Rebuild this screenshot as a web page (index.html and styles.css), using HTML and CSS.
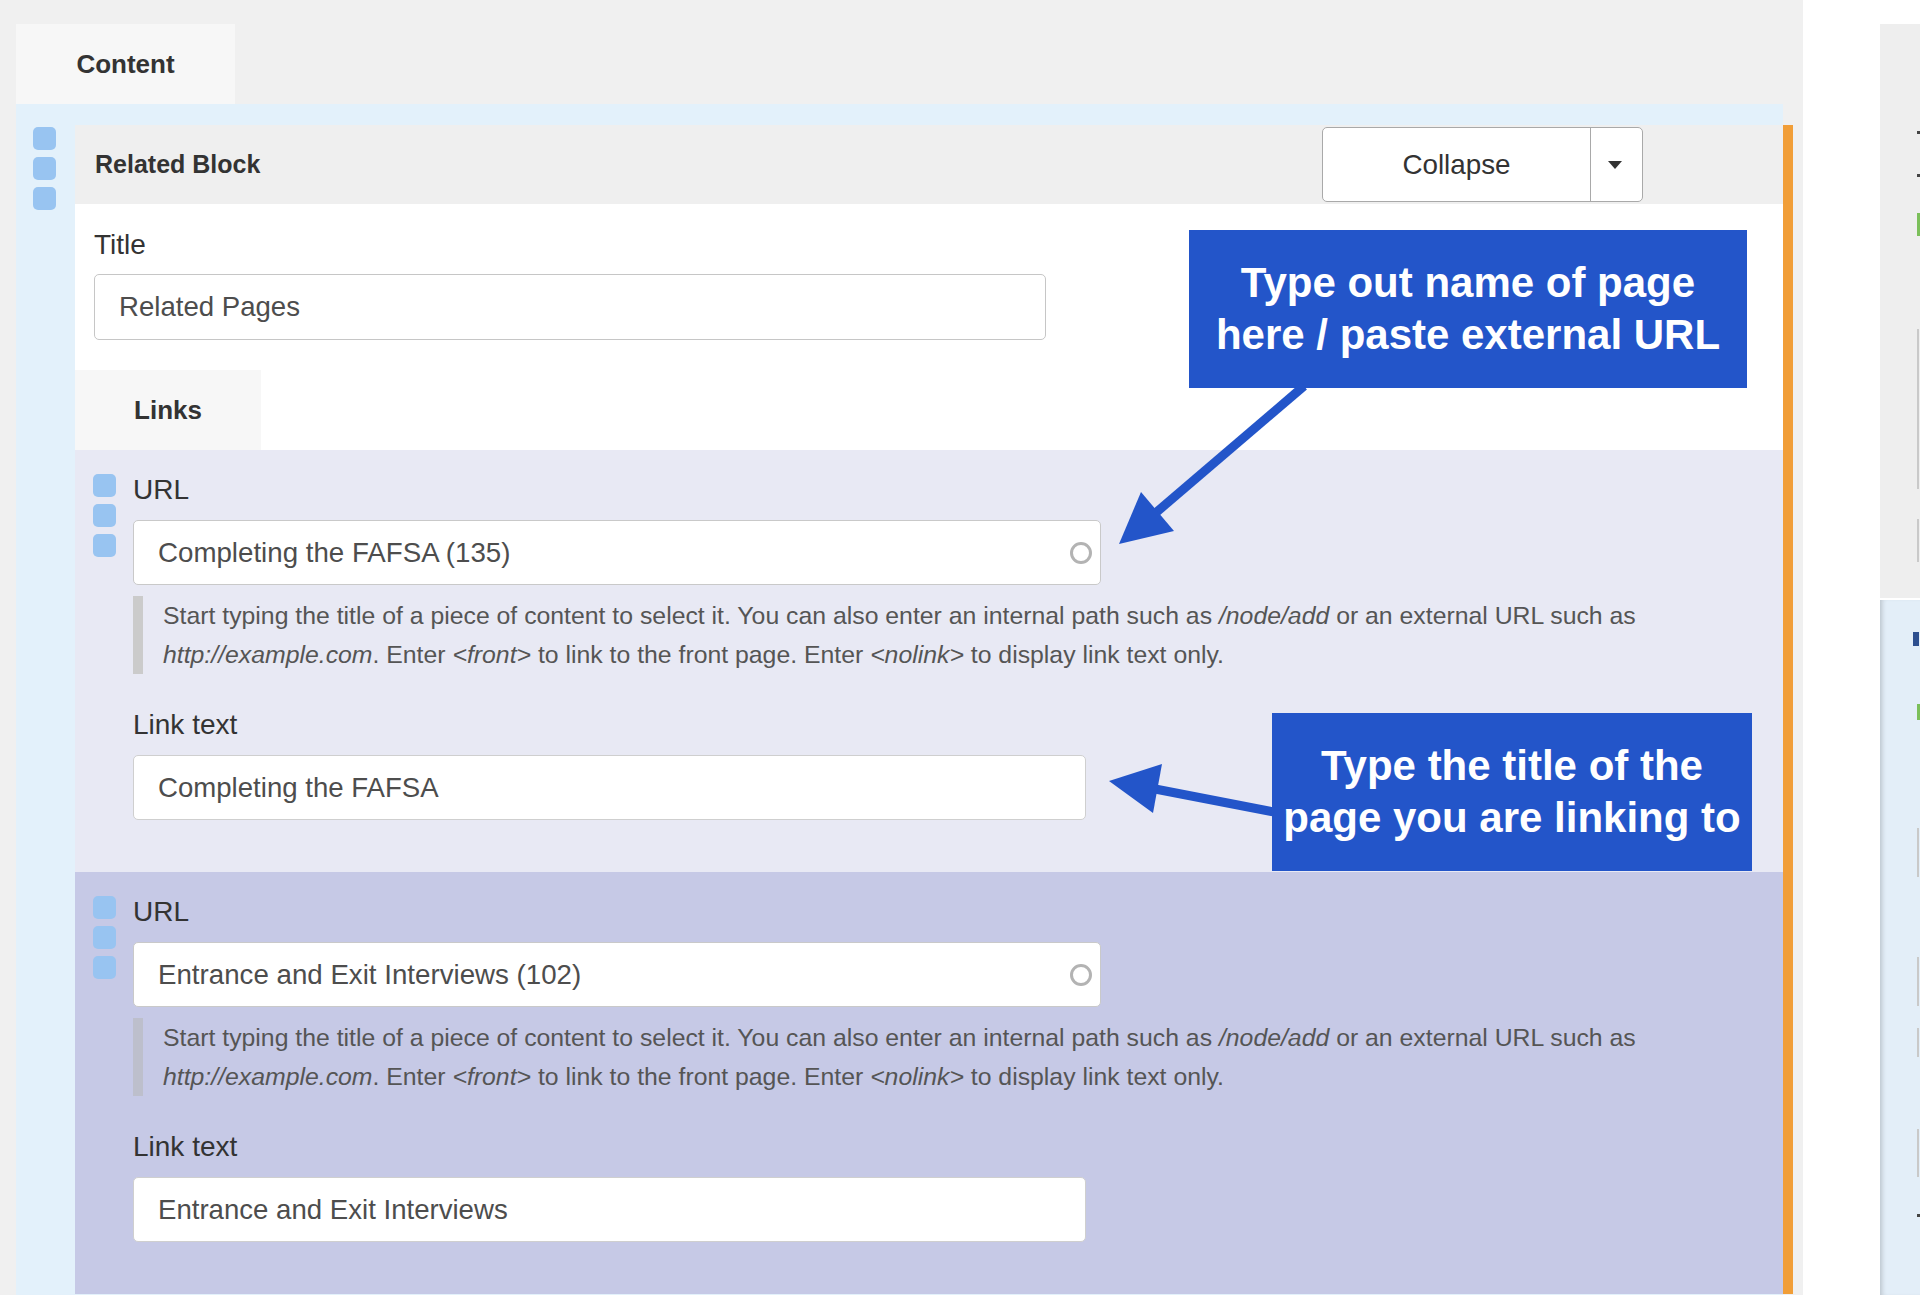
FILE: index.html
```html
<!DOCTYPE html>
<html lang="en">
<head>
  <meta charset="UTF-8" />
  <title>Related Block</title>
  <meta name="viewport" content="width=device-width, initial-scale=1.0" />
  <link rel="stylesheet" href="styles.css">
</head>
<body>
  <div class="page">
    <main class="main">
      <div class="tab-content">Content</div>

      <div class="region">
        <div class="handles"><span></span><span></span><span></span></div>

        <div class="block">
          <div class="block-header">
            <h2>Related Block</h2>
            <div class="split-btn">
              <button class="btn-main" type="button">Collapse</button>
              <button class="btn-caret" type="button"><span class="caret"></span></button>
            </div>
          </div>

          <div class="block-body">
            <div class="title-field">
              <label class="field-label">Title</label>
              <input class="text-input title-input" type="text" value="Related Pages" />
            </div>
            <div class="tab-links">Links</div>
          </div>

          <div class="link-item">
            <div class="handles"><span></span><span></span><span></span></div>
            <div class="link-fields">
              <label class="field-label">URL</label>
              <div class="autocomplete">
                <input type="text" value="Completing the FAFSA (135)" />
                <span class="throbber"></span>
              </div>
              <div class="description">
                Start typing the title of a piece of content to select it. You can also enter an internal path such as <em>/node/add</em> or an external URL such as <em>http://example.com</em>. Enter <em>&lt;front&gt;</em> to link to the front page. Enter <em>&lt;nolink&gt;</em> to display link text only.
              </div>
              <label class="field-label spaced">Link text</label>
              <input class="text-input link-input" type="text" value="Completing the FAFSA" />
            </div>
          </div>

          <div class="link-item alt">
            <div class="handles"><span></span><span></span><span></span></div>
            <div class="link-fields">
              <label class="field-label">URL</label>
              <div class="autocomplete">
                <input type="text" value="Entrance and Exit Interviews (102)" />
                <span class="throbber"></span>
              </div>
              <div class="description">
                Start typing the title of a piece of content to select it. You can also enter an internal path such as <em>/node/add</em> or an external URL such as <em>http://example.com</em>. Enter <em>&lt;front&gt;</em> to link to the front page. Enter <em>&lt;nolink&gt;</em> to display link text only.
              </div>
              <label class="field-label spaced">Link text</label>
              <input class="text-input link-input" type="text" value="Entrance and Exit Interviews" />
            </div>
          </div>
        </div>
      </div>
    </main>

    <div class="gutter"></div>

    <aside class="side">
      <div class="side-top">
        <span class="mark dark m1"></span>
        <span class="mark dark m2"></span>
        <span class="mark green m3"></span>
        <span class="mark line m4"></span>
        <span class="mark line m5"></span>
      </div>
      <div class="side-bottom">
        <span class="mark navy m12"></span>
        <span class="mark green m6"></span>
        <span class="mark line m7"></span>
        <span class="mark line m8"></span>
        <span class="mark line m9"></span>
        <span class="mark line m10"></span>
        <span class="mark dark m11"></span>
      </div>
    </aside>
  </div>

  <!-- annotations drawn over the form -->
  <div class="callout callout-url">Type out name of page<br>here / paste external URL</div>
  <div class="callout callout-text">Type the title of the<br>page you are linking to</div>

  <svg class="arrows" width="1920" height="1295" viewBox="0 0 1920 1295">
    <line x1="1304" y1="386" x2="1152" y2="516" stroke="#2355c9" stroke-width="9" />
    <polygon points="1119,544 1141,492 1174,531" fill="#2355c9" />
    <line x1="1274" y1="812" x2="1150" y2="788" stroke="#2355c9" stroke-width="9" />
    <polygon points="1109,781 1162,764 1153,813" fill="#2355c9" />
  </svg>
</body>
</html>
```

FILE: styles.css
```css
html, body {
  margin: 0;
  padding: 0;
  width: 1920px;
  height: 1295px;
  overflow: hidden;
  font-family: "Liberation Sans", Arial, sans-serif;
  background: #fff;
  color: #333;
}

.page {
  display: flex;
  height: 1295px;
}

.main {
  width: 1803px;
  flex: none;
  box-sizing: border-box;
  padding: 24px 20px 0 16px;
  background: #f0f0f0;
  overflow: hidden;
}

.gutter {
  width: 77px;
  flex: none;
  background: #fff;
}

.tab-content {
  width: 219px;
  height: 80px;
  line-height: 80px;
  text-align: center;
  background: #f7f7f7;
  font-size: 26px;
  font-weight: bold;
  color: #333;
}

.region {
  display: flex;
  align-items: flex-start;
  padding-top: 21px;
  background: #e3f1fb;
  min-height: 1200px;
}

.handles {
  display: flex;
  flex-direction: column;
  gap: 7px;
  flex: none;
  box-sizing: border-box;
}

.handles span {
  width: 23px;
  height: 23px;
  border-radius: 5px;
  background: #98c4f1;
}

.region > .handles {
  width: 59px;
  padding: 2px 0 0 17px;
}

.block {
  flex: 1;
  min-width: 0;
  margin-right: -10px;
  border-right: 10px solid #f19e38;
}

.block-header {
  display: flex;
  align-items: center;
  justify-content: space-between;
  height: 79px;
  padding: 0 140px 0 20px;
  background: #efefef;
}

.block-header h2 {
  margin: 0;
  font-size: 25px;
  font-weight: bold;
  color: #333;
}

.split-btn {
  display: flex;
  width: 321px;
  height: 75px;
  box-sizing: border-box;
  border: 1.5px solid #a9a9a9;
  border-radius: 5px;
  background: #fff;
  overflow: hidden;
}

.btn-main {
  width: 268px;
  border: none;
  border-right: 1.5px solid #a9a9a9;
  background: transparent;
  font-family: inherit;
  font-size: 27.8px;
  color: #333;
  padding: 0;
}

.btn-caret {
  flex: 1;
  border: none;
  background: transparent;
  display: flex;
  align-items: center;
  justify-content: center;
  padding: 0 4px 0 0;
}

.caret {
  width: 0;
  height: 0;
  border-left: 7px solid transparent;
  border-right: 7px solid transparent;
  border-top: 8px solid #333;
}

.block-body {
  background: #fff;
  padding-top: 25px;
}

.title-field {
  padding: 0 19px;
}

.field-label {
  display: block;
  font-size: 28px;
  line-height: 32px;
  color: #333;
  margin-bottom: 13px;
}

.text-input {
  display: block;
  box-sizing: border-box;
  height: 66px;
  padding: 0 24px;
  border: 1.5px solid #c6c6c6;
  border-radius: 5px;
  background: #fff;
  font-family: inherit;
  font-size: 27.6px;
  color: #4d4d4d;
  outline: none;
}

.title-input {
  width: 952px;
}

.tab-links {
  margin-top: 30px;
  width: 186px;
  height: 80px;
  line-height: 80px;
  text-align: center;
  background: #f7f7f7;
  font-size: 26px;
  font-weight: bold;
  color: #333;
}

.link-item {
  display: flex;
  align-items: flex-start;
  padding: 24px 30px 52px 0;
  background: #e8e9f4;
}

.link-item.alt {
  background: #c6c9e6;
}

.link-item > .handles {
  width: 58px;
  padding-left: 18px;
}

.link-fields {
  flex: 1;
  min-width: 0;
}

.link-fields .field-label {
  margin-bottom: 14px;
}

.link-fields .spaced {
  margin-top: 35px;
}

.autocomplete {
  display: flex;
  align-items: center;
  width: 968px;
  height: 65px;
  box-sizing: border-box;
  padding-right: 8px;
  border: 1.5px solid #c9c9c9;
  border-radius: 5px;
  background: #fff;
}

.autocomplete input {
  flex: 1;
  height: 100%;
  min-width: 0;
  border: none;
  outline: none;
  background: transparent;
  padding: 0 0 0 24px;
  font-family: inherit;
  font-size: 27.7px;
  color: #4d4d4d;
}

.throbber {
  width: 22px;
  height: 22px;
  box-sizing: border-box;
  border: 3.5px solid #b3b3b3;
  border-radius: 50%;
}

.description {
  margin-top: 11px;
  padding-left: 20px;
  border-left: 10px solid #cbcbcb;
  font-size: 24.8px;
  line-height: 39px;
  color: #555;
}

.alt .description {
  border-left-color: #bdbfcc;
}

.link-input {
  width: 953px;
  height: 65px;
  border-color: #cfcfcf;
}

.callout {
  position: absolute;
  display: flex;
  align-items: center;
  justify-content: center;
  box-sizing: border-box;
  height: 158px;
  background: #2355c9;
  color: #fff;
  font-size: 42px;
  font-weight: bold;
  line-height: 52px;
  text-align: center;
}

.callout-url {
  left: 1189px;
  top: 230px;
  width: 558px;
}

.callout-text {
  left: 1272px;
  top: 713px;
  width: 480px;
}

.arrows {
  position: absolute;
  left: 0;
  top: 0;
  pointer-events: none;
}

.side {
  flex: 1;
  display: flex;
  flex-direction: column;
  padding-top: 24px;
  overflow: hidden;
}

.side-top {
  height: 574px;
  flex: none;
  background: #eeeeee;
  padding-left: 37px;
  box-sizing: border-box;
  overflow: hidden;
}

.side-bottom {
  flex: 1;
  margin-top: 2px;
  background: #e3eef8;
  box-shadow: inset 5px 0 5px -3px rgba(0, 0, 0, 0.18);
  padding-left: 37px;
  overflow: hidden;
}

.mark {
  display: block;
  width: 3px;
}

.mark.dark { background: #444; height: 3px; }
.mark.green { background: #7bbf5a; }
.mark.line { background: #c9c9c9; width: 2px; }
.mark.navy { background: #2d4f8f; width: 6px; }

.m1 { margin-top: 107px; }
.m2 { margin-top: 40px; }
.m3 { margin-top: 36px; height: 23px; }
.m4 { margin-top: 93px; height: 160px; }
.m5 { margin-top: 30px; height: 43px; }

.m12 { margin-top: 32px; margin-left: -4px; height: 14px; }
.m6 { margin-top: 58px; height: 16px; }
.m7 { margin-top: 108px; height: 49px; }
.m8 { margin-top: 80px; height: 49px; }
.m9 { margin-top: 22px; height: 29px; }
.m10 { margin-top: 72px; height: 48px; }
.m11 { margin-top: 37px; height: 19px; width: 3px; }
```
